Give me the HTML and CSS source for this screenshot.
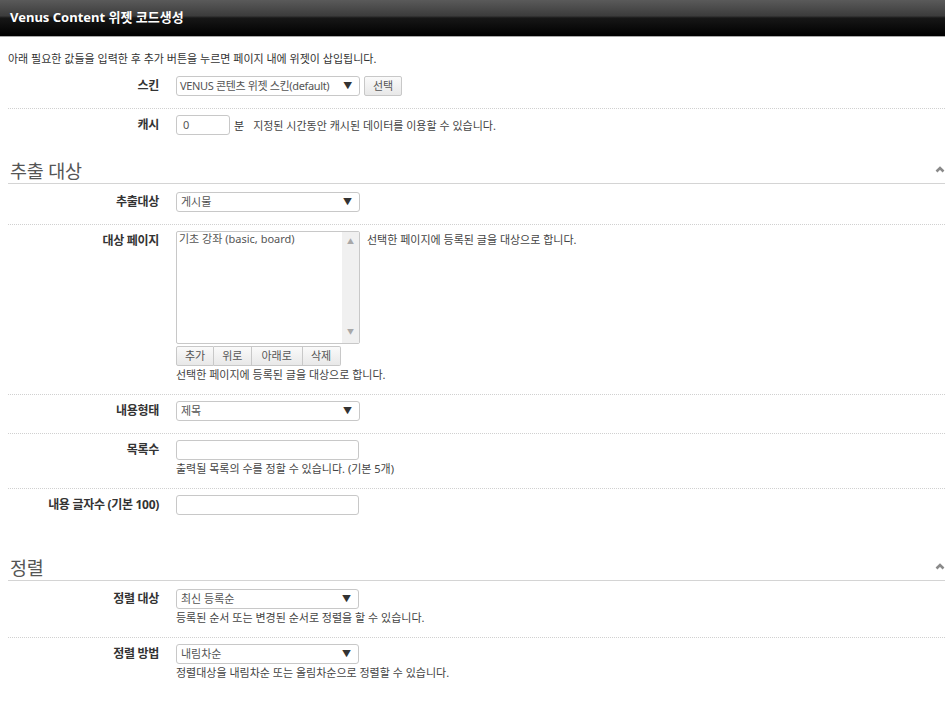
FILE: index.html
```html
<!DOCTYPE html>
<html lang="ko">

<head>
  <meta charset="UTF-8">
  <title>Venus Content 위젯 코드생성</title>
  <link rel="stylesheet" href="styles.css">
</head>

<body>
  <div class="titlebar">Venus Content 위젯 코드생성</div>

  <div class="content">
    <p class="intro">아래 필요한 값들을 입력한 후 추가 버튼을 누르면 페이지 내에 위젯이 삽입됩니다.</p>

    <div class="row">
      <div class="lbl">스킨</div>
      <div class="field">
        <div class="inline">
          <span class="select w-skin">VENUS 콘텐츠 위젯 스킨(default)</span>
          <span class="btn">선택</span>
        </div>
      </div>
    </div>

    <div class="row last">
      <div class="lbl">캐시</div>
      <div class="field">
        <div class="inline">
          <span class="input w-small">0</span>
          <span class="unit">분</span>
          <span class="note">지정된 시간동안 캐시된 데이터를 이용할 수 있습니다.</span>
        </div>
      </div>
    </div>

    <!-- 추출 대상 -->
    <div class="section">
      <h2>추출 대상</h2>
      <svg class="fold" width="10" height="8" viewBox="0 0 10 8">
        <polyline points="1.5,6.5 5,3 8.5,6.5" fill="none" stroke="#8a8a8a" stroke-width="2.6"/>
      </svg>
    </div>

    <div class="row first">
      <div class="lbl">추출대상</div>
      <div class="field">
        <span class="select">게시물</span>
      </div>
    </div>

    <div class="row">
      <div class="lbl">대상 페이지</div>
      <div class="field">
        <div class="inline top">
          <div class="listbox">
            <div class="options">
              <div class="option">기초 강좌 (basic, board)</div>
            </div>
            <div class="scrollbar">
              <span class="arrow">▲</span>
              <span class="arrow">▼</span>
            </div>
          </div>
          <span class="note side">선택한 페이지에 등록된 글을 대상으로 합니다.</span>
        </div>
        <div class="btn-group">
          <span class="btn">추가</span>
          <span class="btn">위로</span>
          <span class="btn">아래로</span>
          <span class="btn">삭제</span>
        </div>
        <p class="help">선택한 페이지에 등록된 글을 대상으로 합니다.</p>
      </div>
    </div>

    <div class="row">
      <div class="lbl">내용형태</div>
      <div class="field">
        <span class="select">제목</span>
      </div>
    </div>

    <div class="row">
      <div class="lbl">목록수</div>
      <div class="field">
        <span class="input"></span>
        <p class="help">출력될 목록의 수를 정할 수 있습니다. (기본 5개)</p>
      </div>
    </div>

    <div class="row last">
      <div class="lbl">내용 글자수 (기본 100)</div>
      <div class="field">
        <span class="input"></span>
      </div>
    </div>

    <!-- 정렬 -->
    <div class="section wide">
      <h2>정렬</h2>
      <svg class="fold" width="10" height="8" viewBox="0 0 10 8">
        <polyline points="1.5,6.5 5,3 8.5,6.5" fill="none" stroke="#8a8a8a" stroke-width="2.6"/>
      </svg>
    </div>

    <div class="row first">
      <div class="lbl">정렬 대상</div>
      <div class="field">
        <span class="select w-sort">최신 등록순</span>
        <p class="help">등록된 순서 또는 변경된 순서로 정렬을 할 수 있습니다.</p>
      </div>
    </div>

    <div class="row last">
      <div class="lbl">정렬 방법</div>
      <div class="field">
        <span class="select w-sort">내림차순</span>
        <p class="help">정렬대상을 내림차순 또는 올림차순으로 정렬할 수 있습니다.</p>
      </div>
    </div>
  </div>
</body>

</html>
```

FILE: styles.css
```css
body {
  margin: 0;
  font-family: "Noto Sans", "Noto Sans CJK KR", sans-serif;
  font-size: 11px;
  letter-spacing: 0;
  color: #333;
  background: #fff;
  overflow: hidden;
}

.titlebar {
  height: 36px;
  line-height: 34px;
  padding-left: 10px;
  color: #fff;
  font-size: 13px;
  font-weight: bold;
  background: linear-gradient(to bottom, #5a5a5a 0%, #3c3c3c 44%, #171717 50%, #000 100%);
  border-bottom: 1px solid #a8a8a8;
}

.content {
  padding: 0 0 0 8px;
}

.intro {
  margin: 12px 0 1px;
  line-height: 20px;
  color: #333;
}

/* 폼 행 */
.row {
  display: grid;
  grid-template-columns: 151px 1fr;
  column-gap: 17px;
  padding: 6px 0 12px;
  border-bottom: 1px dotted #d0d0d0;
}

.row.first {
  padding-top: 8px;
}

.row.last {
  border-bottom: none;
}

.lbl {
  text-align: right;
  font-size: 12px;
  font-weight: bold;
  letter-spacing: -0.3px;
  line-height: 20px;
  color: #333;
}

.field {
  min-width: 0;
}

.inline {
  display: flex;
  align-items: center;
}

.inline.top {
  align-items: flex-start;
}

.select,
.input {
  display: block;
  box-sizing: border-box;
  width: 184px;
  height: 20px;
  line-height: 18px;
  padding: 0 4px;
  border: 1px solid #c8c8c8;
  border-radius: 3px;
  background: #fff;
  color: #555;
  position: relative;
}

.inline .select,
.inline .input {
  display: inline-block;
}

.select::after {
  content: "▼";
  position: absolute;
  right: 7px;
  top: 0;
  font-size: 9px;
  color: #333;
}

.input {
  width: 183px;
}

.w-skin {
  padding-left: 3px;
  letter-spacing: -0.35px;
}

.w-small {
  width: 54px;
  padding-left: 6px;
}

.w-sort {
  width: 183px;
}

.btn {
  display: inline-block;
  box-sizing: border-box;
  height: 20px;
  line-height: 18px;
  padding: 0 8px;
  border: 1px solid #c8c8c8;
  background: linear-gradient(to bottom, #fafafa, #e8e8e8);
  color: #555;
}

.inline .btn {
  margin-left: 4px;
  width: 38px;
  text-align: center;
  padding: 0;
  border-radius: 2px;
}

.unit {
  margin-left: 4px;
  color: #333;
}

.note {
  margin-left: 9px;
  color: #444;
}

.note.side {
  margin-left: 7px;
  line-height: 18px;
}

/* 대상 페이지 목록 */
.listbox {
  display: flex;
  box-sizing: border-box;
  width: 184px;
  height: 113px;
  border: 1px solid #c8c8c8;
  border-radius: 2px;
  background: #fff;
}

.options {
  flex: 1;
  padding: 0 2px;
}

.option {
  line-height: 14px;
  color: #555;
}

.scrollbar {
  width: 17px;
  background: #f0f0f0;
  display: flex;
  flex-direction: column;
  justify-content: space-between;
  align-items: center;
  padding: 5px 0 6px;
  box-sizing: border-box;
}

.arrow {
  font-size: 7px;
  line-height: 10px;
  color: #a8a8a8;
}

.btn-group {
  display: flex;
  margin-top: 2px;
}

.btn-group .btn + .btn {
  border-left: none;
}

.btn-group .btn:first-child {
  border-radius: 2px 0 0 2px;
}

.btn-group .btn:nth-child(3) {
  padding: 0 10px;
}

.btn-group .btn:last-child {
  padding-right: 9px;
  border-radius: 0 2px 2px 0;
}

.help {
  margin: 0 0 -1px;
  line-height: 17px;
  color: #444;
}

/* 섹션 제목 */
.section {
  display: flex;
  justify-content: space-between;
  align-items: center;
  margin-top: 12px;
  padding-left: 2px;
  border-bottom: 1px solid #d4d4d4;
}

.section.wide {
  margin-top: 29px;
}

.section h2 {
  margin: 0;
  font-size: 18.5px;
  font-weight: normal;
  line-height: 24px;
  letter-spacing: -0.2px;
  color: #555;
}

.fold {
  margin-right: 0;
  margin-top: -4px;
}
```
